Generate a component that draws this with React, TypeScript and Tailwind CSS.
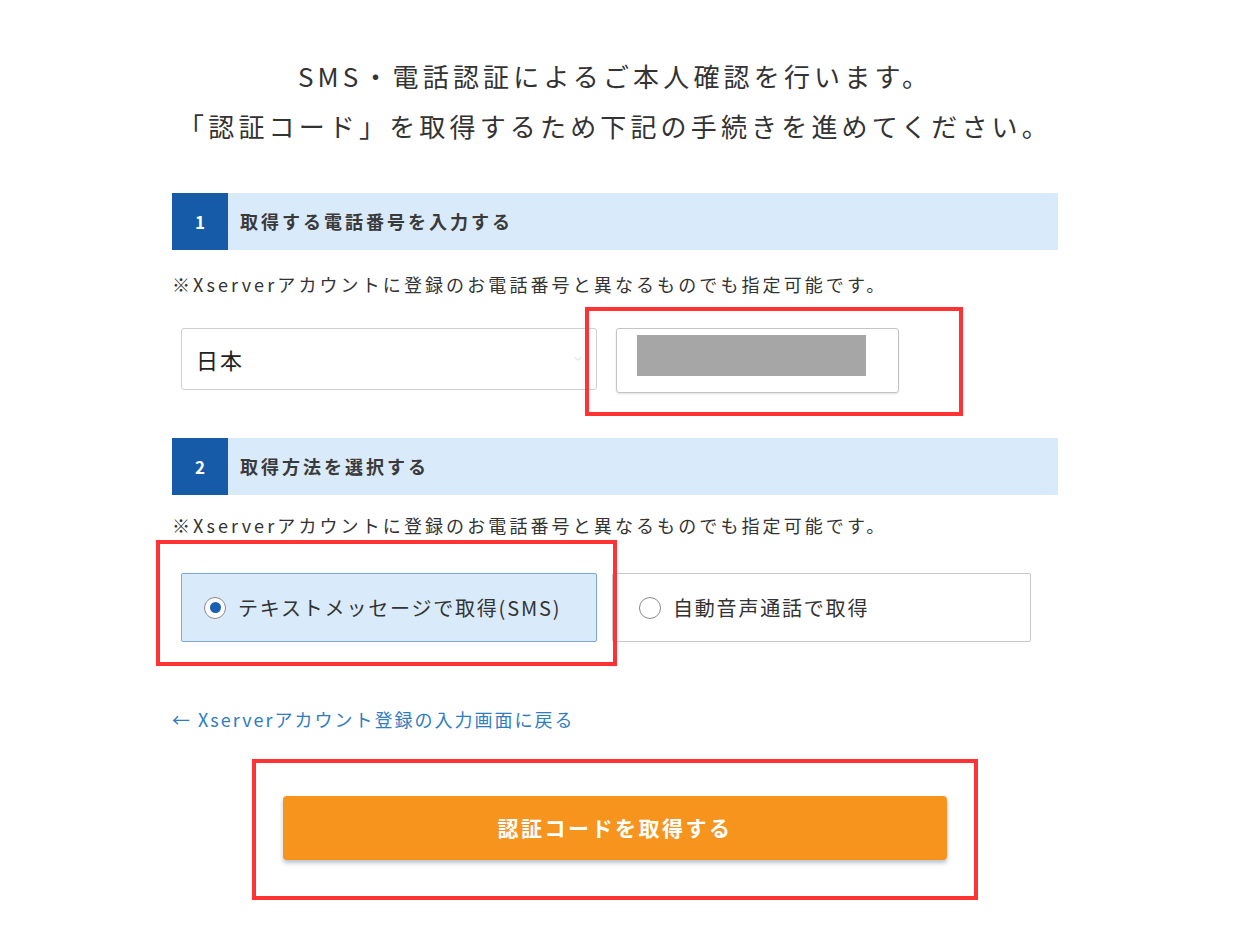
import { ChevronDown } from 'lucide-react';

const font = { fontFamily: '"Noto Sans CJK JP", "Noto Sans", sans-serif' };

function StepHeader({ num, label }: { num: string; label: string }) {
  return (
    <div className="flex h-[57px] items-stretch bg-[#d9eafb]">
      <div className="flex w-[56px] items-center justify-center bg-[#155ba8] text-[17px] font-bold text-white">
        {num}
      </div>
      <div className="flex items-center pl-[12px] text-[18px] font-bold tracking-[3px] text-[#3a3a3a]">{label}</div>
    </div>
  );
}

function Note() {
  return (
    <p className="text-[18px] leading-[24px] tracking-[3.1px] text-[#333]">
      ※Xserverアカウントに登録のお電話番号と異なるものでも指定可能です。
    </p>
  );
}

function RadioOption({ label, checked }: { label: string; checked?: boolean }) {
  return (
    <div
      className={
        checked
          ? 'flex h-[69px] w-[416px] items-center gap-[12px] rounded-[2px] border border-[#7ea9d6] bg-[#d9eafb] pl-[22px]'
          : 'flex h-[69px] w-[419px] items-center gap-[12px] rounded-[2px] border border-[#c8c8c8] bg-white pl-[26px]'
      }
    >
      <span className="flex h-[22px] w-[22px] items-center justify-center rounded-full border border-[#8a8a8a] bg-white">
        {checked && <span className="h-[11px] w-[11px] rounded-full bg-[#1a5fb0]" />}
      </span>
      <span className="text-[20px] tracking-[1.8px] text-[#333]">{label}</span>
    </div>
  );
}

export default function App() {
  return (
    <div className="relative min-h-[927px] w-[1236px] bg-white" style={font}>
      <div className="ml-[172px] w-[886px] pt-[51px] pb-[60px]">
        <h1 className="text-center text-[26px] leading-[50px] tracking-[0.16em] text-[#333]">
          SMS・電話認証によるご本人確認を行います。
          <br />
          「認証コード」を取得するため下記の手続きを進めてください。
        </h1>

        <div className="mt-[42px]">
          <StepHeader num="1" label="取得する電話番号を入力する" />
        </div>
        <div className="mt-[22px]">
          <Note />
        </div>
        <div className="mt-[32px] flex items-start gap-[19px] pl-[9px]">
          <div className="flex h-[62px] w-[416px] items-center justify-between rounded-[3px] border border-[#cfcfcf] pl-[14px] pr-[12px]">
            <span className="text-[22px] tracking-[2px] text-[#222]">日本</span>
            <ChevronDown className="h-[12px] w-[12px] text-[#c4c4c4]" strokeWidth={1.5} />
          </div>
          <div className="flex h-[65px] w-[283px] items-start rounded-[3px] border border-[#c4c4c4] pl-[20px] pt-[6px] shadow-[0_1px_2px_rgba(0,0,0,0.12)]">
            <div className="h-[41px] w-[229px] bg-[#a6a6a6]" />
          </div>
        </div>

        <div className="mt-[45px]">
          <StepHeader num="2" label="取得方法を選択する" />
        </div>
        <div className="mt-[18px]">
          <Note />
        </div>
        <div className="mt-[36px] flex gap-[15px] pl-[9px]">
          <RadioOption label="テキストメッセージで取得(SMS)" checked />
          <RadioOption label="自動音声通話で取得" />
        </div>

        <a className="mt-[65px] block text-[18px] leading-[24px] tracking-[2px] text-[#2f7cc2]">
          ← Xserverアカウント登録の入力画面に戻る
        </a>

        <div className="mt-[65px] flex justify-center">
          <button className="h-[64px] w-[664px] rounded-[4px] bg-[#f7941d] text-[21px] font-bold tracking-[2.5px] text-white shadow-[0_3px_4px_rgba(60,80,110,0.35)]">
            認証コードを取得する
          </button>
        </div>
      </div>

      {/* annotation boxes */}
      <div className="absolute left-[585px] top-[307px] h-[109px] w-[378px] border-[4px] border-[#ff3333]" />
      <div className="absolute left-[156px] top-[540px] h-[126px] w-[461px] border-[4px] border-[#ff3333]" />
      <div className="absolute left-[252px] top-[759px] h-[141px] w-[726px] border-[4px] border-[#ff3333]" />
    </div>
  );
}
